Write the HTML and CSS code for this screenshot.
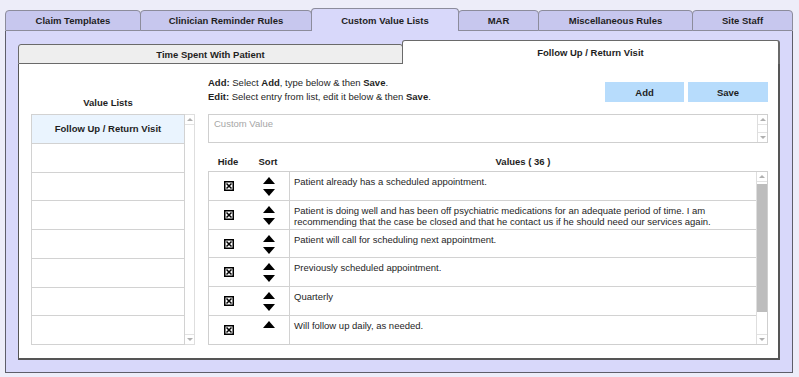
FILE: index.html
```html
<!DOCTYPE html>
<html lang="en">
<head>
    <meta charset="UTF-8">
    <title>Custom Value Lists</title>
    <link rel="stylesheet" href="styles.css">
</head>
<body>
    <!-- Top level tabs -->
    <div class="tabs">
        <div class="tab tab-claim">Claim Templates</div>
        <div class="tab tab-clinician">Clinician Reminder Rules</div>
        <div class="tab tab-custom active">Custom Value Lists</div>
        <div class="tab tab-mar">MAR</div>
        <div class="tab tab-misc">Miscellaneous Rules</div>
        <div class="tab tab-staff">Site Staff</div>
    </div>

    <div class="panel">
        <div class="subtabs">
            <div class="subtab subtab-time">Time Spent With Patient</div>
            <div class="subtab subtab-follow active">Follow Up / Return Visit</div>
        </div>

        <div class="subpanel">
            <!-- Value lists column -->
            <div class="lists">
                <div class="lists-label">Value Lists</div>
                <div class="list">
                    <div class="list-rows">
                        <div class="list-row selected">Follow Up / Return Visit</div>
                        <div class="list-row"></div>
                        <div class="list-row"></div>
                        <div class="list-row"></div>
                        <div class="list-row"></div>
                        <div class="list-row"></div>
                        <div class="list-row"></div>
                        <div class="list-row"></div>
                    </div>
                    <div class="scroll">
                        <div class="scroll-btn"><span class="tri-up"></span></div>
                        <div class="scroll-btn"><span class="tri-down"></span></div>
                    </div>
                </div>
            </div>

            <!-- Editor column -->
            <div class="editor">
                <div class="editor-top">
                    <div class="help">
                        <div><b>Add:</b> Select <b>Add</b>, type below &amp; then <b>Save</b>.</div>
                        <div><b>Edit:</b> Select entry from list, edit it below &amp; then <b>Save</b>.</div>
                    </div>
                    <div class="buttons">
                        <div class="btn btn-add">Add</div>
                        <div class="btn btn-save">Save</div>
                    </div>
                </div>

                <div class="custom">
                    <div class="custom-input">Custom Value</div>
                    <div class="scroll scroll-small">
                        <div class="scroll-btn"><span class="tri-up"></span></div>
                        <div class="scroll-btn"><span class="tri-down"></span></div>
                    </div>
                </div>

                <div class="colheads">
                    <div class="col-hide">Hide</div>
                    <div class="col-sort">Sort</div>
                    <div class="col-values">Values ( 36 )</div>
                </div>

                <div class="table">
                    <div class="rows">
                        <div class="row">
                            <div class="cell-hide"><svg class="check" width="10" height="10" viewBox="0 0 10 10"><rect x="0.75" y="0.75" width="8.5" height="8.5" fill="none" stroke="#000" stroke-width="1.5"/><path d="M2.5 2.5L7.5 7.5M7.5 2.5L2.5 7.5" stroke="#000" stroke-width="1.5"/></svg></div>
                            <div class="cell-sort"><svg width="12" height="7" viewBox="0 0 12 7"><path d="M6 0L12 7H0Z"/></svg><svg width="12" height="7" viewBox="0 0 12 7"><path d="M0 0H12L6 7Z"/></svg></div>
                            <div class="cell-val">Patient already has a scheduled appointment.</div>
                        </div>
                        <div class="row">
                            <div class="cell-hide"><svg class="check" width="10" height="10" viewBox="0 0 10 10"><rect x="0.75" y="0.75" width="8.5" height="8.5" fill="none" stroke="#000" stroke-width="1.5"/><path d="M2.5 2.5L7.5 7.5M7.5 2.5L2.5 7.5" stroke="#000" stroke-width="1.5"/></svg></div>
                            <div class="cell-sort"><svg width="12" height="7" viewBox="0 0 12 7"><path d="M6 0L12 7H0Z"/></svg><svg width="12" height="7" viewBox="0 0 12 7"><path d="M0 0H12L6 7Z"/></svg></div>
                            <div class="cell-val">Patient is doing well and has been off psychiatric medications for an adequate period of time. I am recommending that the case be closed and that he contact us if he should need our services again.</div>
                        </div>
                        <div class="row">
                            <div class="cell-hide"><svg class="check" width="10" height="10" viewBox="0 0 10 10"><rect x="0.75" y="0.75" width="8.5" height="8.5" fill="none" stroke="#000" stroke-width="1.5"/><path d="M2.5 2.5L7.5 7.5M7.5 2.5L2.5 7.5" stroke="#000" stroke-width="1.5"/></svg></div>
                            <div class="cell-sort"><svg width="12" height="7" viewBox="0 0 12 7"><path d="M6 0L12 7H0Z"/></svg><svg width="12" height="7" viewBox="0 0 12 7"><path d="M0 0H12L6 7Z"/></svg></div>
                            <div class="cell-val">Patient will call for scheduling next appointment.</div>
                        </div>
                        <div class="row">
                            <div class="cell-hide"><svg class="check" width="10" height="10" viewBox="0 0 10 10"><rect x="0.75" y="0.75" width="8.5" height="8.5" fill="none" stroke="#000" stroke-width="1.5"/><path d="M2.5 2.5L7.5 7.5M7.5 2.5L2.5 7.5" stroke="#000" stroke-width="1.5"/></svg></div>
                            <div class="cell-sort"><svg width="12" height="7" viewBox="0 0 12 7"><path d="M6 0L12 7H0Z"/></svg><svg width="12" height="7" viewBox="0 0 12 7"><path d="M0 0H12L6 7Z"/></svg></div>
                            <div class="cell-val">Previously scheduled appointment.</div>
                        </div>
                        <div class="row">
                            <div class="cell-hide"><svg class="check" width="10" height="10" viewBox="0 0 10 10"><rect x="0.75" y="0.75" width="8.5" height="8.5" fill="none" stroke="#000" stroke-width="1.5"/><path d="M2.5 2.5L7.5 7.5M7.5 2.5L2.5 7.5" stroke="#000" stroke-width="1.5"/></svg></div>
                            <div class="cell-sort"><svg width="12" height="7" viewBox="0 0 12 7"><path d="M6 0L12 7H0Z"/></svg><svg width="12" height="7" viewBox="0 0 12 7"><path d="M0 0H12L6 7Z"/></svg></div>
                            <div class="cell-val">Quarterly</div>
                        </div>
                        <div class="row">
                            <div class="cell-hide"><svg class="check" width="10" height="10" viewBox="0 0 10 10"><rect x="0.75" y="0.75" width="8.5" height="8.5" fill="none" stroke="#000" stroke-width="1.5"/><path d="M2.5 2.5L7.5 7.5M7.5 2.5L2.5 7.5" stroke="#000" stroke-width="1.5"/></svg></div>
                            <div class="cell-sort"><svg width="12" height="7" viewBox="0 0 12 7"><path d="M6 0L12 7H0Z"/></svg></div>
                            <div class="cell-val">Will follow up daily, as needed.</div>
                        </div>
                    </div>
                    <div class="tscroll">
                        <div class="scroll-btn"><span class="tri-up"></span></div>
                        <div class="thumb"></div>
                        <div class="track"></div>
                        <div class="scroll-btn"><span class="tri-down"></span></div>
                    </div>
                </div>
            </div>
        </div>
    </div>
</body>
</html>
```

FILE: styles.css
```css
/* Basic page */
body {
    margin: 0;
    background-color: #ededf9;
    font-family: 'Liberation Sans', Arial, sans-serif;
    font-size: 9.5px;
    color: #1e1e1e;
}

/* Top tab strip */
.tabs {
    display: flex;
    align-items: flex-end;
    height: 23px;
    margin-top: 8px;
    padding-left: 5px;
}

.tab {
    box-sizing: border-box;
    height: 21px;
    display: flex;
    align-items: center;
    justify-content: center;
    border: 1px solid #8c8c9c;
    border-radius: 4px 4px 0 0;
    background-color: #c7c7ee;
    font-weight: bold;
}

.tab + .tab {
    margin-left: -1px;
}

.tab.active {
    height: 23px;
    border-bottom: none;
    background-color: #d8d8fa;
}

.tab-claim { width: 136px; }
.tab-clinician { width: 172px; }
.tab-custom { width: 148px; }
.tab-mar { width: 81px; }
.tab-misc { width: 155px; }
.tab-staff { width: 101px; }

/* Lavender panel under the tabs */
.panel {
    margin: 0 6px 0 5px;
    padding: 9px 12px 12px;
    background-color: #d8d8fa;
    border: 1px solid #5e5e6a;
    border-top: none;
}

.subtabs {
    display: flex;
    align-items: flex-end;
    height: 24px;
}

.subtab {
    box-sizing: border-box;
    height: 20px;
    display: flex;
    align-items: center;
    justify-content: center;
    border: 1px solid #6a6a6a;
    border-radius: 3px 3px 0 0;
    background-color: #eeeeee;
    font-weight: bold;
}

.subtab-time { width: 385px; }
.subtab-follow { width: 378px; margin-left: -1px; }

.subtab.active {
    height: 24px;
    border-bottom: none;
    border-right-width: 2px;
    background-color: #ffffff;
}

/* White content panel */
.subpanel {
    display: flex;
    gap: 13px;
    padding: 14px 10px 13px 12px;
    background-color: #ffffff;
    border: 1px solid #555555;
    border-top: none;
    border-right-width: 2px;
    border-bottom-width: 2px;
}

/* Left value lists */
.lists {
    width: 164px;
}

.lists-label {
    box-sizing: border-box;
    height: 36px;
    display: flex;
    align-items: flex-end;
    justify-content: center;
    padding: 0 10px 4px 0;
    line-height: 14px;
    font-weight: bold;
}

.list {
    display: flex;
    height: 231px;
}

.list-rows {
    flex: 1;
    display: flex;
    flex-direction: column;
    border: 1px solid #d2d2d2;
}

.list-row {
    flex: 1;
    display: flex;
    align-items: center;
    justify-content: center;
    border-bottom: 1px solid #d2d2d2;
}

.list-row:last-child {
    border-bottom: none;
}

.list-row.selected {
    background-color: #eaf4fe;
    font-weight: bold;
}

/* Small scrollbars */
.scroll {
    width: 10px;
    box-sizing: border-box;
    display: flex;
    flex-direction: column;
    justify-content: space-between;
    border: 1px solid #dedede;
    border-left: none;
}

.scroll-btn {
    height: 9px;
    display: flex;
    align-items: center;
    justify-content: center;
    border-bottom: 1px solid #e2e2e2;
}

.scroll .scroll-btn:last-child,
.tscroll .scroll-btn:last-child {
    border-bottom: none;
    border-top: 1px solid #e2e2e2;
}

.tri-up {
    width: 0;
    height: 0;
    border-left: 3px solid transparent;
    border-right: 3px solid transparent;
    border-bottom: 3px solid #b0b0b0;
}

.tri-down {
    width: 0;
    height: 0;
    border-left: 3px solid transparent;
    border-right: 3px solid transparent;
    border-top: 3px solid #b0b0b0;
}

/* Right editor */
.editor {
    width: 560px;
    display: flex;
    flex-direction: column;
}

.editor-top {
    height: 36px;
    display: flex;
    justify-content: space-between;
}

.help {
    margin-top: -2px;
    line-height: 14px;
}

.buttons {
    display: flex;
    gap: 4px;
    margin-top: 4px;
}

.btn {
    height: 20px;
    display: flex;
    align-items: center;
    justify-content: center;
    background-color: #b7dcfc;
    font-weight: bold;
}

.btn-add { width: 79px; }
.btn-save { width: 80px; }

.custom {
    box-sizing: border-box;
    height: 29px;
    display: flex;
    border: 1px solid #cfcfcf;
}

.custom-input {
    flex: 1;
    padding: 3px 5px;
    line-height: 12px;
    color: #a6a6a6;
}

.custom .scroll {
    border: none;
    border-left: 1px solid #dedede;
}

.colheads {
    box-sizing: border-box;
    height: 28px;
    display: flex;
    align-items: flex-end;
    padding: 0 10px 2px 0;
    line-height: 14px;
    font-weight: bold;
}

.col-hide,
.col-sort {
    width: 40px;
    text-align: center;
}

.col-values {
    flex: 1;
    text-align: center;
}

/* Values table */
.table {
    box-sizing: border-box;
    height: 174px;
    display: flex;
    border: 1px solid #cfcfcf;
}

.rows {
    flex: 1;
    display: flex;
    flex-direction: column;
}

.row {
    flex: 1;
    display: flex;
    border-bottom: 1px solid #d2d2d2;
}

.row:last-child {
    border-bottom: none;
}

.cell-hide {
    width: 40px;
    display: flex;
    justify-content: center;
    padding-top: 9px;
}

.cell-sort {
    width: 40px;
    display: flex;
    flex-direction: column;
    align-items: center;
    gap: 5px;
    padding-top: 5px;
    border-right: 1px solid #d2d2d2;
}

.cell-sort svg {
    display: block;
}

.cell-val {
    flex: 1;
    padding: 4px 30px 0 4px;
    line-height: 11px;
}

.tscroll {
    width: 10px;
    display: flex;
    flex-direction: column;
    border-left: 1px solid #dedede;
}

.thumb {
    height: 128px;
    margin-top: 2px;
    background-color: #bdbdbd;
}

.track {
    flex: 1;
}
```
